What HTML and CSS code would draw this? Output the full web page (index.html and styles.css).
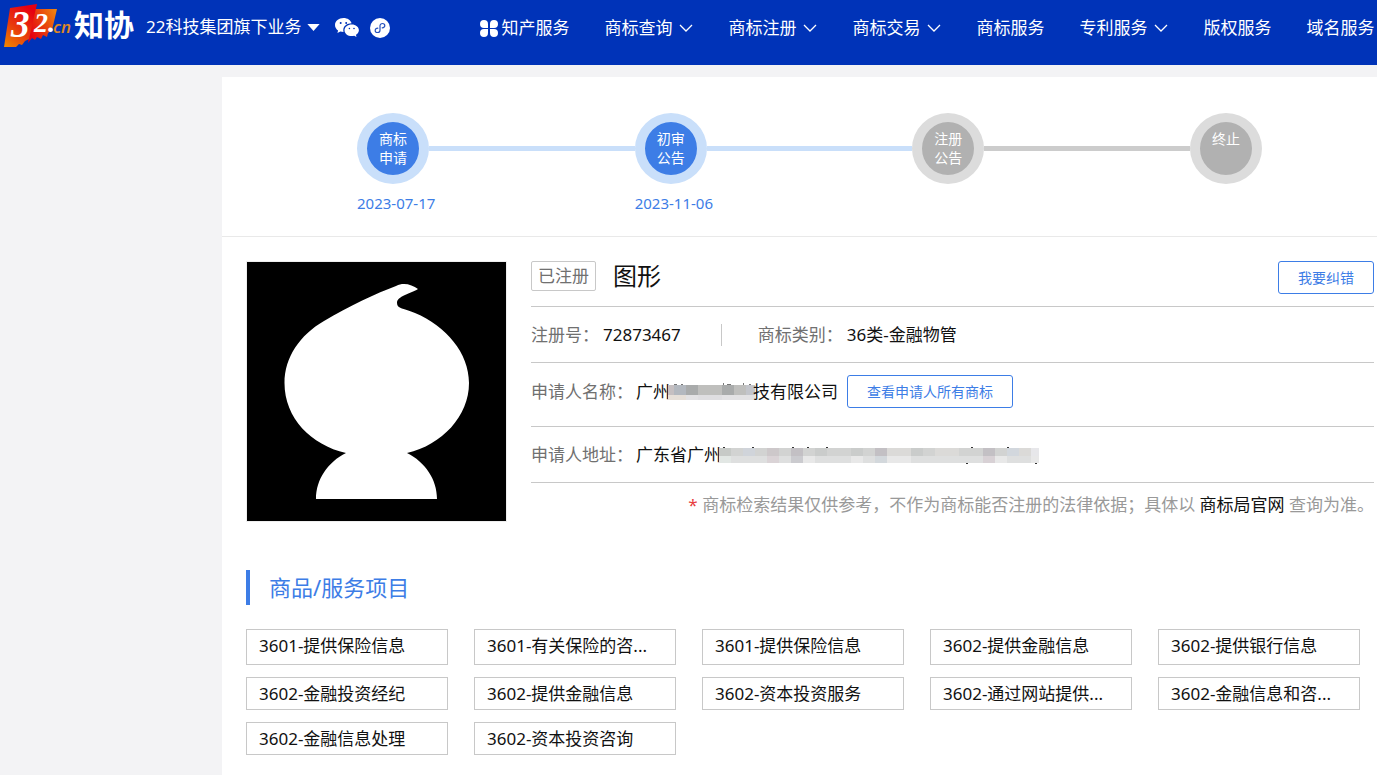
FILE: index.html
```html
<!DOCTYPE html>
<html lang="zh-CN">
<head>
<meta charset="utf-8">
<title>商标详情</title>
<link rel="stylesheet" href="styles.css">
</head>
<body>
<header class="topbar">
  <a class="logo" href="#" aria-label="32.cn 知协">
    <svg width="134" height="48" viewBox="0 0 134 48">
      <defs>
        <linearGradient id="flagA" x1="0" y1="1" x2="0.6" y2="0"><stop offset="0" stop-color="#f08a00"/><stop offset="0.5" stop-color="#e8380d"/><stop offset="1" stop-color="#e60012"/></linearGradient>
        <linearGradient id="flagB" x1="0" y1="0.6" x2="1" y2="0"><stop offset="0" stop-color="#e60012"/><stop offset="0.5" stop-color="#e8450d"/><stop offset="1" stop-color="#f08a10"/></linearGradient>
      </defs>
      <path d="M31 9h22l-5 21-4 3-1 4-4-2-2 4-4-2-2 3-3-2-4 5 2-14z" fill="url(#flagB)"/>
      <path d="M6 8l27-4-3 13-5 22-4 2-3 4-3-1-3 3H0z" fill="url(#flagA)"/>
      <text class="logo-num" x="7" y="37" font-size="37">3</text>
      <text class="logo-num" x="30" y="32" font-size="28">2.</text>
      <text class="logo-cn" x="49" y="33">cn</text>
      <text class="logo-name" x="70" y="36">知协</text>
    </svg>
  </a>
  <button class="group-menu" type="button">22科技集团旗下业务
    <svg width="13" height="7" viewBox="0 0 14 8"><path d="M0 0h14L7 8z" fill="#fff"/></svg>
  </button>
  <a class="social" href="#" aria-label="微信">
    <svg width="24" height="20" viewBox="0 0 24 20" fill="#fff">
      <path d="M8.500 0C3.800 0 0 3 0 7c0 2.300 1.200 4.200 3.100 5.500L2.400 15l3-1.500c1 .3 2 .4 3.100.4A6 6 0 0 1 8.300 12c0-3.900 3.700-6.700 8.300-6.700C15.800 2.200 12.500 0 8.500 0z"/>
      <path d="M16.700 6.400c-4 0-7.200 2.600-7.200 5.800s3.200 5.900 7.200 5.900c.8 0 1.700-.1 2.500-.4l2.300 1.300-.6-2.200c1.800-1.200 3-2.800 3-4.600 0-3.200-3.200-5.800-7.200-5.800z"/>
      <g fill="#0033b8"><circle cx="5.700" cy="5" r="1"/><circle cx="11.200" cy="5" r="1"/><circle cx="14.400" cy="10.500" r=".8"/><circle cx="19" cy="10.500" r=".8"/></g>
    </svg>
  </a>
  <a class="social" href="#" aria-label="小程序">
    <svg width="20" height="20" viewBox="0 0 20 20"><circle cx="10" cy="10" r="10" fill="#fff"/><path d="M7.800 10.200c-1.600 0-2.600.9-2.600 2.200 0 1.200 1 2.100 2.300 2.100 1.400 0 2.500-.9 2.500-2.300V7.800c0-1.400 1.100-2.300 2.500-2.300 1.300 0 2.300.9 2.300 2.100 0 1.300-1 2.200-2.600 2.200" fill="none" stroke="#2450bd" stroke-width="1.200" stroke-linecap="round"/></svg>
  </a>
  <nav class="nav">
    <a href="#"><svg class="apps" width="18" height="17" viewBox="0 0 18 17" fill="#fff"><path d="M4 0a4 4 0 0 1 4 4v4H4a4 4 0 0 1 0-8zM14 0a4 4 0 0 1 0 8h-4V4a4 4 0 0 1 4-4zM4 9h4v4a4 4 0 1 1-4-4zM10 9h4a4 4 0 1 1-4 4z"/></svg>知产服务</a>
    <a href="#">商标查询<svg class="chev" width="14" height="8" viewBox="0 0 14 8"><path d="M1 1l6 6 6-6"/></svg></a>
    <a href="#">商标注册<svg class="chev" width="14" height="8" viewBox="0 0 14 8"><path d="M1 1l6 6 6-6"/></svg></a>
    <a href="#">商标交易<svg class="chev" width="14" height="8" viewBox="0 0 14 8"><path d="M1 1l6 6 6-6"/></svg></a>
    <a href="#">商标服务</a>
    <a href="#">专利服务<svg class="chev" width="14" height="8" viewBox="0 0 14 8"><path d="M1 1l6 6 6-6"/></svg></a>
    <a href="#">版权服务</a>
    <a href="#">域名服务</a>
  </nav>
</header>

<main class="page">
  <ol class="steps">
    <li class="step done"><span class="dot">商标<br>申请</span><time class="date">2023-07-17</time></li>
    <li class="line done"></li>
    <li class="step done"><span class="dot">初审<br>公告</span><time class="date">2023-11-06</time></li>
    <li class="line done"></li>
    <li class="step"><span class="dot">注册<br>公告</span></li>
    <li class="line"></li>
    <li class="step"><span class="dot">终止</span></li>
  </ol>

  <section class="detail">
    <svg class="mark" viewBox="0 0 259 259" role="img" aria-label="商标图形">
      <rect width="259" height="259" fill="#000"/>
      <path d="M157 22C162 22 167 24 171 27C163 32 150 34 150 41C150 47 157 46 168 51C199 64 222 91 222 121C222 154 195 183 160 191C178 200 190 217 190 237H69C69 217 81 200 99 191C64 183 37.500 156 37.500 121C37.500 95 53 73 77 59C102 44 130 31 149 24C152 22.500 154 22 157 22Z" fill="#fff"/>
    </svg>
    <div class="info">
      <div class="row title-row">
        <span class="status">已注册</span>
        <h1 class="name">图形</h1>
        <button class="btn report" type="button">我要纠错</button>
      </div>
      <div class="row">
        <span class="label">注册号：</span><span class="value">72873467</span>
        <span class="sep"></span>
        <span class="label">商标类别：</span><span class="value">36类-金融物管</span>
      </div>
      <div class="row tall">
        <span class="label">申请人名称：</span>
        <span class="value masked">广州<svg width="87" height="17" viewBox="0 0 87 17" shape-rendering="crispEdges">
          <path d="M6 1h3v1H6zM13 1h2v1h-2zM55 0h1v2h-1zM59 1h4v1h-4zM75 0h1v2h-1zM81 1h2v1h-2z" fill="#777"/>
          <path d="M0 2h87v10H0z" fill="#bfbfbd"/><path d="M0 2h6v10H0z" fill="#c5bfc1"/><path d="M6 2h12v10H6z" fill="#b3b8bf"/><path d="M18 2h12v10H18zM54 2h12v10H54z" fill="#a9abab"/><path d="M78 2h9v10h-9z" fill="#c3c5cb"/>
          <path d="M0 12h87v5H0z" fill="#e3e2e4"/><path d="M0 12h18v5H0z" fill="#e6dfd8"/><path d="M30 12h24v5H30z" fill="#dfdee1"/>
        </svg>技有限公司</span>
        <button class="btn" type="button">查看申请人所有商标</button>
      </div>
      <div class="row">
        <span class="label">申请人地址：</span>
        <span class="value masked">广东省广州<svg width="320" height="18" viewBox="0 0 320 18" shape-rendering="crispEdges">
          <path d="M4 1h2v1H4zM33 1h2v1h-2zM73 1h2v1h-2zM88 1h2v1h-2zM107 1h2v1h-2zM252 1h2v1h-2zM288 1h2v1h-2zM247 17h2v1h-2zM316 17h2v1h-2z" fill="#333"/>
          <path d="M0 2h320v8H0z" fill="#d2d3d2"/><path d="M0 10h320v7H0z" fill="#dedfdf"/>
          <path d="M0 2h12v8H0z" fill="#c7cac7"/><path d="M24 2h12v8H24z" fill="#d0d4da"/><path d="M48 2h12v8H48z" fill="#cdc8ca"/><path d="M72 2h12v8H72zM156 2h12v8h-12zM264 2h12v8h-12z" fill="#c3c0c4"/><path d="M96 2h12v8H96zM132 2h12v8h-12zM192 2h12v8h-12z" fill="#cacccb"/><path d="M168 2h24v8h-24zM216 2h24v8h-24zM300 2h12v8h-12z" fill="#dbdad8"/><path d="M288 2h12v8h-12z" fill="#d2d7dd"/><path d="M312 2h8v8h-8z" fill="#e7e7ea"/>
          <path d="M0 10h12v7H0z" fill="#e2e7e4"/><path d="M48 10h12v7H48z" fill="#dad3d6"/><path d="M72 10h12v7H72z" fill="#cbcbcf"/><path d="M84 10h12v7H84zM132 10h12v7h-12zM168 10h24v7h-24zM276 10h12v7h-12zM312 10h8v7h-8z" fill="#e8e8e8"/><path d="M264 10h12v7h-12z" fill="#d8d1d5"/><path d="M156 10h12v7h-12z" fill="#d3d8dc"/>
        </svg></span>
      </div>
      <p class="note"><i>*</i> 商标检索结果仅供参考，不作为商标能否注册的法律依据；具体以 <a href="#">商标局官网</a> 查询为准。</p>
    </div>
  </section>

  <section class="goods">
    <h2 class="heading">商品/服务项目</h2>
    <ul class="items">
      <li>3601-提供保险信息</li><li>3601-有关保险的咨...</li><li>3601-提供保险信息</li><li>3602-提供金融信息</li><li>3602-提供银行信息</li>
      <li>3602-金融投资经纪</li><li>3602-提供金融信息</li><li>3602-资本投资服务</li><li>3602-通过网站提供...</li><li>3602-金融信息和咨...</li>
      <li>3602-金融信息处理</li><li>3602-资本投资咨询</li>
    </ul>
  </section>
</main>
</body>
</html>
```
FILE: styles.css
```css
* { box-sizing: border-box; }
body {
  margin: 0;
  min-height: 100vh;
  display: flex;
  flex-direction: column;
  overflow-x: hidden;
  background: #f3f3f5;
  color: #111;
  font: 17px/24px "Noto Sans", "Noto Sans CJK SC", sans-serif;
}
a { color: inherit; text-decoration: none; }
svg { display: block; flex: none; }
button { font: inherit; cursor: pointer; }

.topbar {
  display: flex;
  align-items: flex-start;
  height: 65px;
  padding-left: 4px;
  overflow: hidden;
  background: #0033b8;
  color: #fff;
  white-space: nowrap;
}
.logo { width: 142px; flex: none; }
.logo-num { fill: #fff; font-family: "Liberation Serif", serif; font-weight: 700; font-style: italic; }
.logo-cn { fill: #e08a20; font: italic 600 17px "Open Sans", sans-serif; }
.logo-name { fill: #fff; font: 700 30px "Noto Sans CJK SC", sans-serif; }
.group-menu {
  display: flex;
  align-items: center;
  gap: 6px;
  margin: 15px 15px 0 0;
  padding: 0;
  border: 0;
  background: none;
  color: #fff;
}
.social { width: 35px; flex: none; margin-top: 18px; }
.nav { display: flex; gap: 35px; margin: 16px 0 0 75px; }
.nav a { display: flex; align-items: center; flex: none; }
.apps { margin-right: 3px; }
.chev { margin-left: 7px; fill: none; stroke: #fff; stroke-width: 1.3; }

.page { flex: 1; margin: 12px 0 0 222px; background: #fff; }

.steps {
  display: flex;
  align-items: flex-start;
  height: 160px;
  margin: 0;
  padding: 36px 115px 0 135px;
  border-bottom: 1px solid #e9e9e9;
  list-style: none;
}
.step { width: 72px; flex: none; }
.dot {
  display: block;
  width: 72px;
  height: 71px;
  padding-top: 7px;
  border: 9px solid #dcdcdc;
  border-width: 9px 10px;
  border-radius: 50%;
  background: #b1b1b1;
  color: #fff;
  font-size: 14px;
  line-height: 19px;
  text-align: center;
}
.step.done .dot { border-color: #c9dffa; background: #3d7de6; }
.date { display: block; margin-top: 7px; color: #3d7de6; font-size: 15px; white-space: nowrap; }
.line { flex: 1; height: 5px; margin-top: 33px; background: #ccc; }
.line.done { background: #c9dffa; }

.detail { display: flex; gap: 24px; padding: 24px 3px 0 24px; }
.mark { width: 261px; height: 261px; border: 1px solid #eee; }
.info { flex: 1; min-width: 0; white-space: nowrap; }
.row { display: flex; align-items: center; height: 56px; border-bottom: 1px solid #c8c8c8; }
.row.tall { height: 64px; padding-bottom: 6px; }
.title-row { height: 46px; align-items: flex-start; }
.status { padding: 2px 6px; border: 1px solid #c8c8c8; border-radius: 2px; color: #707070; }
.name { margin: 0 0 0 17px; font-size: 24px; font-weight: 400; line-height: 30px; }
.btn {
  height: 33px;
  padding: 0 19px;
  border: 1px solid #3d7de6;
  border-radius: 3px;
  background: #fff;
  color: #3d7de6;
  font-size: 14px;
}
.report { margin-left: auto; }
.label { color: #707070; }
.value { margin-left: 4px; }
.sep { width: 1px; height: 22px; margin: 0 36px 0 40px; background: #c8c8c8; }
.masked { display: flex; align-items: center; margin: 0 9px 0 3px; }
.masked svg { margin: 0 -2px; }
.note { margin: 10px 0 0; color: #999; text-align: right; }
.note i { color: #e84040; font-style: normal; }
.note a { color: #111; }

.goods { padding: 48px 17px 20px 24px; }
.heading {
  margin: 0 0 24px;
  padding-left: 19px;
  border-left: 4px solid #3d7de6;
  color: #3d7de6;
  font-size: 22px;
  font-weight: 400;
  line-height: 35px;
}
.items {
  display: grid;
  grid-template-columns: repeat(5, 1fr);
  grid-template-rows: 36px;
  grid-auto-rows: 33px;
  gap: 12px 26px;
  margin: 0;
  padding: 0;
  list-style: none;
}
.items li {
  padding: 0 12px;
  overflow: hidden;
  border: 1px solid #c8c8c8;
  line-height: 32px;
  white-space: nowrap;
}
```
